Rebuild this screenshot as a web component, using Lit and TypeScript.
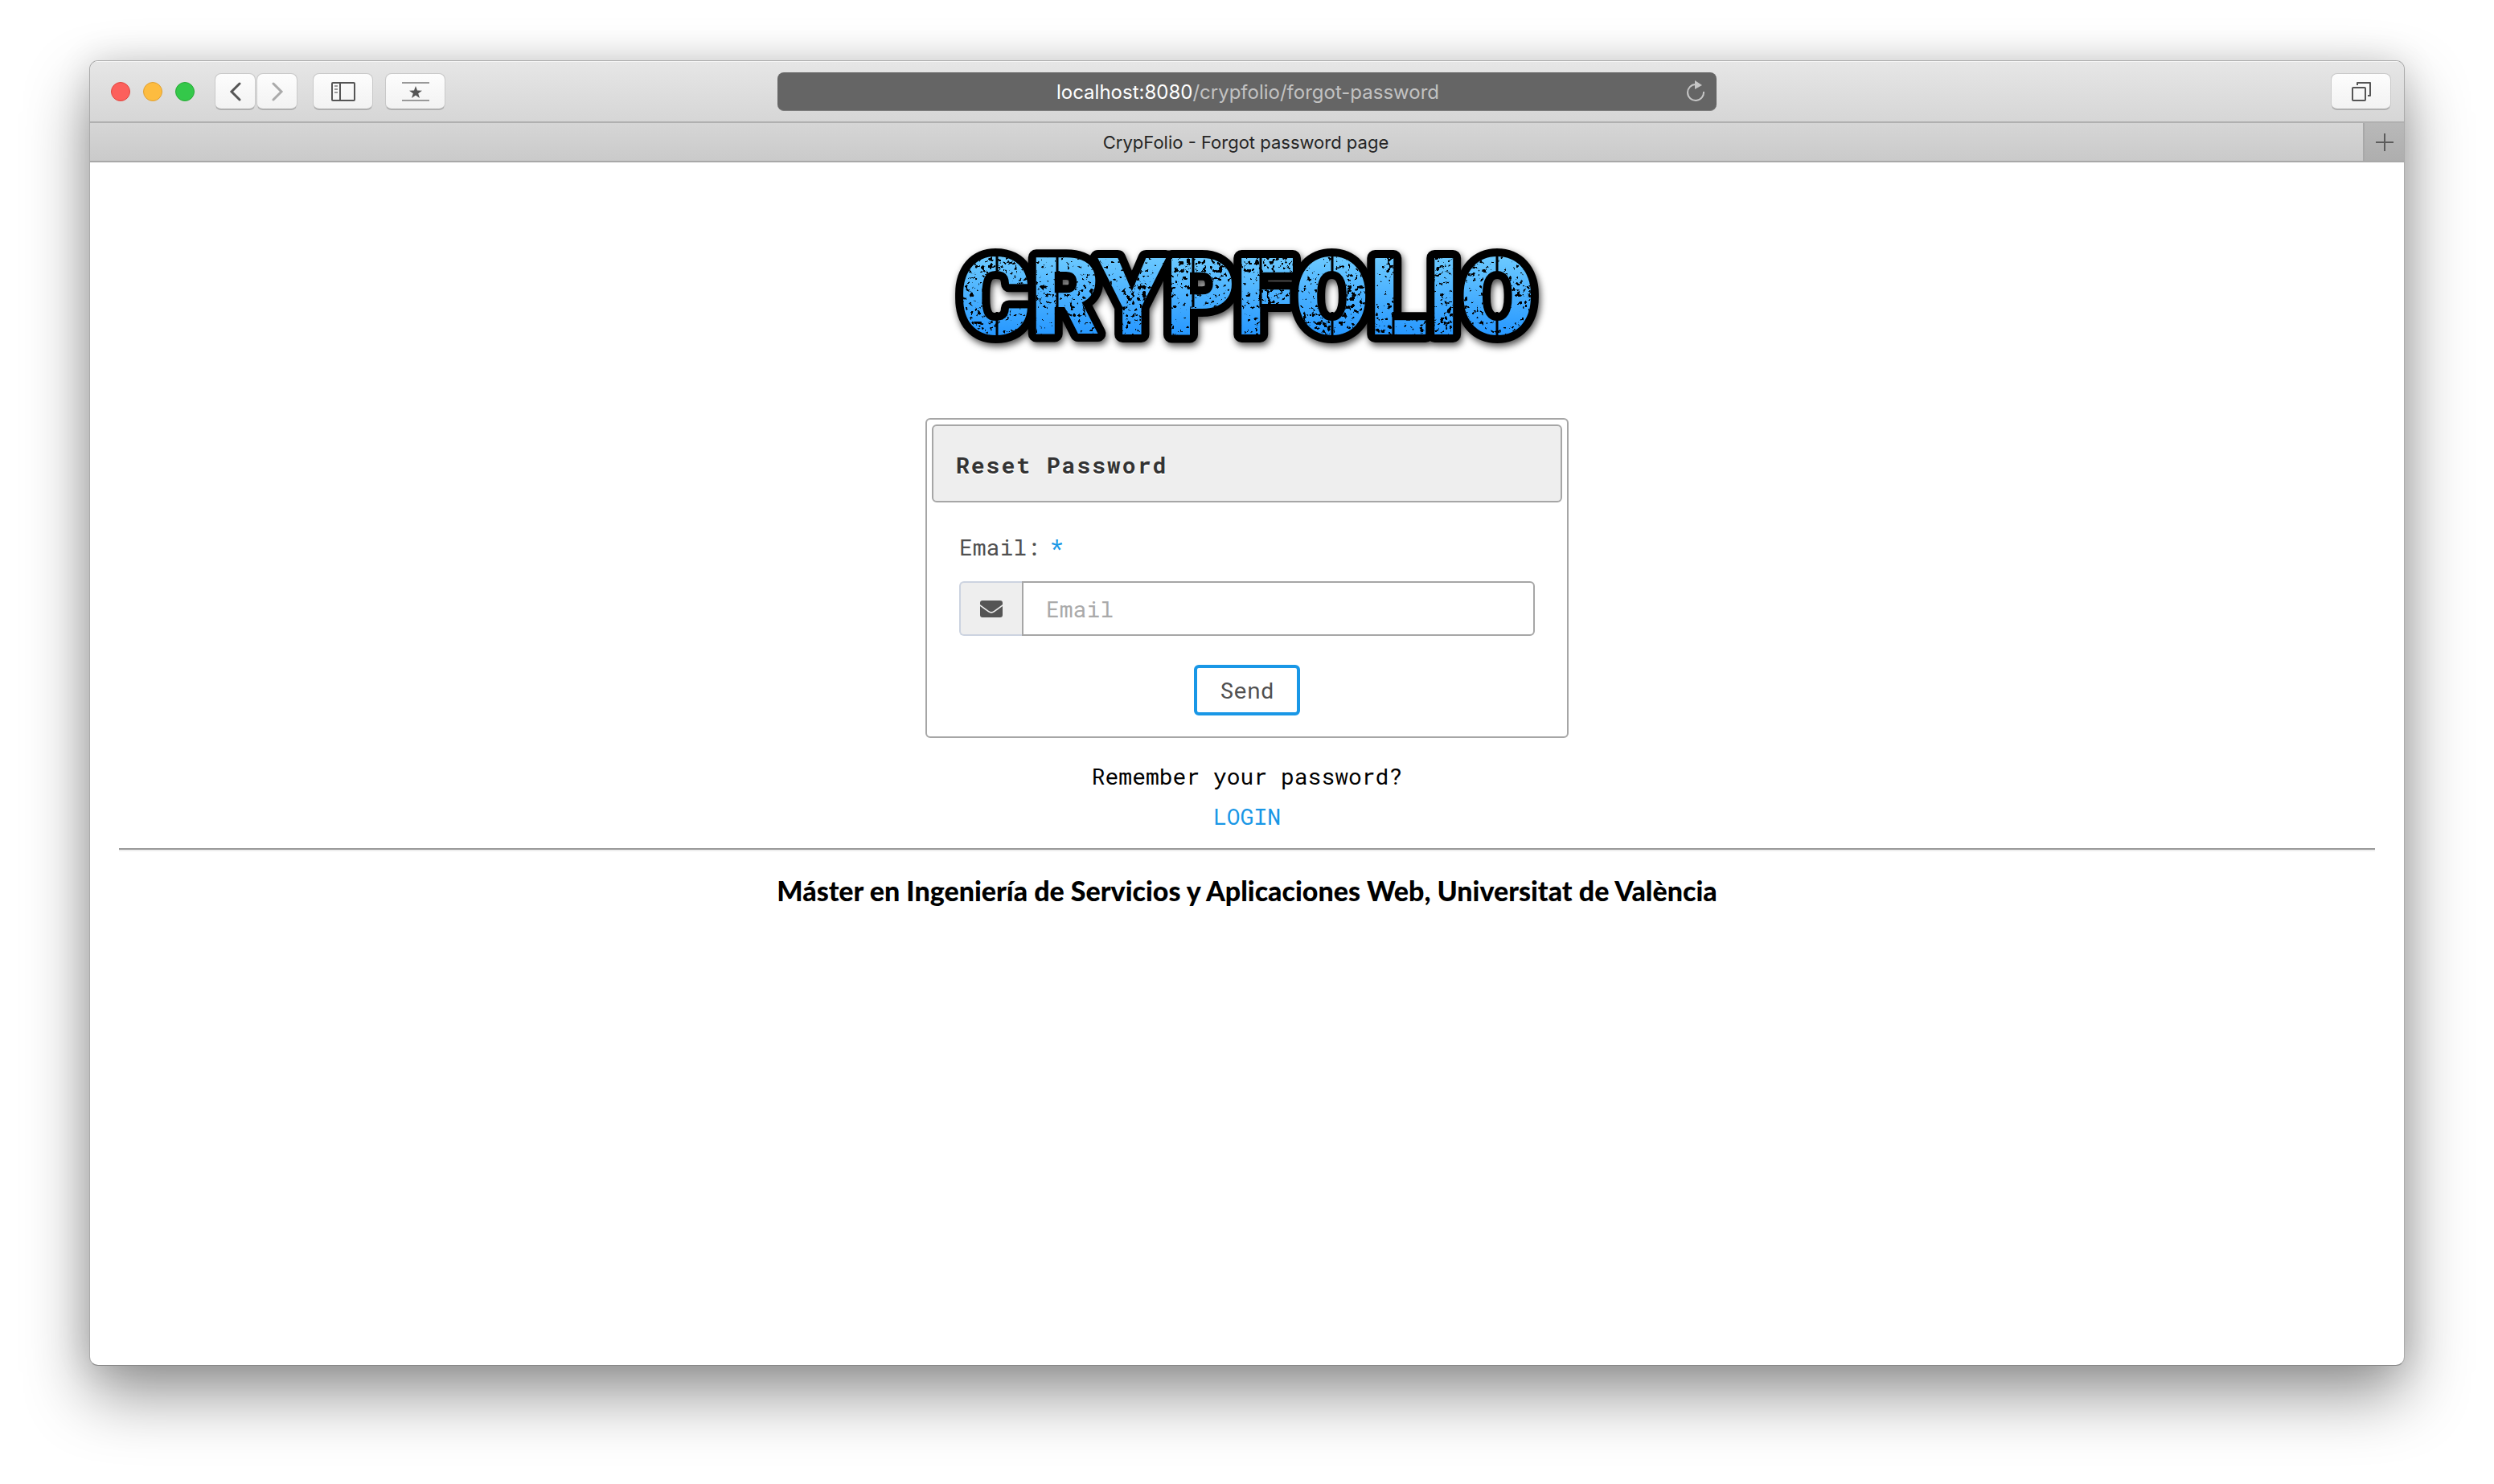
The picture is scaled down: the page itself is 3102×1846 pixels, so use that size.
import { LitElement, html, css, svg } from "lit";
import { customElement, state } from "lit/decorators.js";

@customElement("crypfolio-logo")
export class CrypfolioLogo extends LitElement {
  static styles = css`
    :host { display: block; }
    .art { display: block; width: 780px; height: 170px; }
    .word { font-family: Roboto, "Liberation Sans", sans-serif; font-weight: 900; font-size: 134px; }
  `;

  render() {
    return html`
      <svg class="art" viewBox="0 0 780 170" role="img" aria-label="CRYPFOLIO">
        <defs>
          <linearGradient id="sky" gradientUnits="userSpaceOnUse" x1="0" y1="37" x2="0" y2="137">
            <stop offset="0" stop-color="#6ecbff" />
            <stop offset="1" stop-color="#2697ff" />
          </linearGradient>
          <filter id="soft" x="-5%" y="-20%" width="110%" height="150%">
            <feDropShadow dx="2" dy="4" stdDeviation="4" flood-color="#000" flood-opacity="0.7" />
          </filter>
          <filter id="grunge" x="0" y="0" width="100%" height="100%" color-interpolation-filters="sRGB">
            <feTurbulence type="fractalNoise" baseFrequency="0.2" numOctaves="3" seed="7" result="fine" />
            <feTurbulence type="fractalNoise" baseFrequency="0.03" numOctaves="1" seed="12" result="broad" />
            <feColorMatrix in="fine" type="matrix" values="0 0 0 0 0  0 0 0 0 0  0 0 0 0 0  0 0 0 1 0" result="a" />
            <feColorMatrix in="broad" type="matrix" values="0 0 0 0 0  0 0 0 0 0  0 0 0 0 0  0 0 0 1 0" result="b" />
            <feComposite in="a" in2="b" operator="arithmetic" k1="0" k2="0.7" k3="0.3" k4="0" result="n" />
            <feColorMatrix in="n" type="matrix" values="0 0 0 0 0  0 0 0 0 0  0 0 0 0 0  0 0 0 22 -13" result="spots" />
            <feComposite in="spots" in2="SourceGraphic" operator="in" result="cut" />
            <feMerge><feMergeNode in="SourceGraphic" /><feMergeNode in="cut" /></feMerge>
          </filter>
        </defs>
        <g filter="url(#soft)">
          <text class="word" x="390" y="136" text-anchor="middle" fill="#000" stroke="#000" stroke-width="20" stroke-linejoin="round" aria-hidden="true">CRYPFOLIO</text>
        </g>
        <text class="word" x="390" y="136" text-anchor="middle" fill="url(#sky)" filter="url(#grunge)">CRYPFOLIO</text>
        <path d="M79 38v26M79 108v30M154 38v64M323 38v64M407 38v64M496 38v26M496 108v30M572 108v30M701 38v26M701 108v30" stroke="#000" stroke-width="3" />
      </svg>
    `;
  }
}

const starIcon = svg`<path d="M17 5l2 5.600 6 .1-4.800 3.600 1.800 5.700-5-3.400-5 3.400 1.800-5.700L9 10.700l6-.1z" fill="#555"/>`;

@customElement("app-root")
export class AppRoot extends LitElement {
  @state() private email = "";

  static styles = css`
    :host {
      display: flex;
      box-sizing: border-box;
      min-height: 100vh;
      padding: 75px 111px 147px;
      background: #fff;
      --blue: #1997e6;
      --line: #a6a6a6;
      --mono: "Roboto Mono", "DejaVu Sans Mono", "Liberation Mono", monospace;
      --ui: Inter, "Liberation Sans", sans-serif;
    }
    * { box-sizing: border-box; }
    button, input { font: inherit; margin: 0; }
    svg { display: block; }
    .window {
      flex: 1;
      min-width: 0;
      display: flex;
      flex-direction: column;
      border: 1px solid #aaa;
      border-bottom-color: #888;
      border-radius: 11px;
      overflow: hidden;
      background: #fff;
      box-shadow: 0 36px 80px rgba(0, 0, 0, 0.42), 0 0 44px rgba(0, 0, 0, 0.12);
    }
    .toolbar {
      display: grid;
      grid-template-columns: 1fr minmax(0, 1168px) 1fr;
      align-items: center;
      height: 75px;
      padding: 0 16px;
      border-top: 1px solid #f5f5f5;
      background: linear-gradient(#e6e6e6, #d6d6d6);
    }
    .left { display: flex; align-items: center; }
    .lights { display: flex; gap: 16px; margin: 0 25px 0 10px; }
    .light { width: 24px; height: 24px; border-radius: 50%; border: 1px solid; padding: 0; }
    .red { background: #fc605c; border-color: #e2463f; }
    .amber { background: #fdbc40; border-color: #dfa034; }
    .green { background: #34c84a; border-color: #27aa35; }
    .nav { display: flex; gap: 1px; margin-right: 19px; }
    .tool {
      display: flex;
      align-items: center;
      justify-content: center;
      width: 75px;
      height: 46px;
      padding: 0;
      border: 1px solid #c9c9c9;
      border-bottom: 2px solid #b0b0b0;
      border-radius: 8px;
      background: linear-gradient(#fdfdfd, #f2f2f2);
    }
    .small { width: 51px; }
    .pair { display: flex; gap: 15px; }
    .address {
      display: flex;
      align-items: center;
      height: 48px;
      padding: 0 13px 0 39px;
      border-radius: 8px;
      background: #656565;
      border-bottom: 1px solid #7c7c7c;
      font: 24px/32px var(--ui);
      color: #c2c2c2;
    }
    .url { flex: 1; padding-top: 2px; text-align: center; white-space: nowrap; overflow: hidden; }
    .host { color: #fff; }
    .reload { padding: 0; border: 0; background: none; }
    .right { display: flex; justify-content: flex-end; }
    .tabs {
      display: flex;
      height: 51px;
      border-top: 2px solid #b0b0b0;
      border-bottom: 2px solid #a8a8a8;
      background: linear-gradient(#d6d6d6, #cacaca);
    }
    .tab {
      flex: 1;
      padding: 0 0 0 48px;
      border: 0;
      background: none;
      font: 22px/46px var(--ui);
      color: #262626;
      text-align: center;
    }
    .plus {
      display: flex;
      align-items: center;
      justify-content: center;
      width: 51px;
      padding: 0;
      border: 0;
      border-left: 2px solid #a8a8a8;
      background: linear-gradient(#b9b9b9, #aeaeae);
    }
    .page {
      flex: 1;
      display: flex;
      flex-direction: column;
      align-items: center;
      padding: 78px 36px 0;
      font: 28px/50px var(--mono);
      color: #000;
    }
    .card {
      width: 100%;
      max-width: 800px;
      margin-top: 70px;
      padding: 6px;
      border: 2px solid var(--line);
      border-radius: 6px;
    }
    .title {
      margin: 0;
      padding: 26px 28px 21px;
      border: 2px solid var(--line);
      border-radius: 6px;
      background: #eee;
      font-size: 28px;
      line-height: 46px;
      font-weight: 700;
      letter-spacing: 2px;
      color: #333;
      text-shadow: 0 2px 0 #fff;
    }
    .form {
      display: flex;
      flex-direction: column;
      padding: 31px 34px 20px;
      color: #505050;
    }
    .star { color: var(--blue); }
    .label { display: flex; gap: 12px; margin-bottom: 17px; }
    .group { display: flex; }
    .addon {
      display: flex;
      align-items: center;
      justify-content: center;
      width: 78px;
      height: 68px;
      border: 2px solid #ccd3e0;
      border-right: 0;
      border-radius: 6px 0 0 6px;
      background: #eee;
    }
    .field {
      flex: 1;
      min-width: 0;
      height: 68px;
      padding: 0 28px;
      border: 2px solid var(--line);
      border-radius: 0 6px 6px 0;
      background: #fff;
      color: #505050;
      outline: none;
    }
    .field::placeholder { color: #aaa; opacity: 1; }
    .send {
      align-self: center;
      height: 63px;
      margin-top: 36px;
      padding: 0 28px;
      border: 4px solid var(--blue);
      border-radius: 6px;
      background: #fff;
      color: #505050;
      line-height: 50px;
    }
    .ask { margin: 23px 0 0; }
    .login { color: var(--blue); text-decoration: none; }
    .rule {
      width: 100%;
      height: 4px;
      margin: 14px 0 24px;
      border: 0;
      border-top: 2px solid #999;
      border-bottom: 2px solid #eee;
    }
    .credit { margin: 0; font: 900 34px/50px Lato, "Open Sans", sans-serif; text-align: center; }
  `;

  private onInput(e: Event) {
    this.email = (e.target as HTMLInputElement).value;
  }

  render() {
    return html`
      <div class="window">
        <header class="toolbar">
          <div class="left">
            <div class="lights">
              <button class="light red" aria-label="Close"></button>
              <button class="light amber" aria-label="Minimize"></button>
              <button class="light green" aria-label="Zoom"></button>
            </div>
            <div class="nav">
              <button class="tool small" aria-label="Back">
                <svg width="16" height="24" viewBox="0 0 16 24" fill="none" stroke="#555" stroke-width="3" stroke-linecap="round"><path d="M13 2L3 12l10 10" /></svg>
              </button>
              <button class="tool small" aria-label="Forward">
                <svg width="16" height="24" viewBox="0 0 16 24" fill="none" stroke="#aaa" stroke-width="3" stroke-linecap="round"><path d="M3 2l10 10L3 22" /></svg>
              </button>
            </div>
            <div class="pair">
              <button class="tool" aria-label="Sidebar">
                <svg width="30" height="24" viewBox="0 0 30 24" fill="none" stroke="#555" stroke-width="2"><rect x="1" y="1" width="28" height="22" rx="1" /><path d="M11 1v22" /><path d="M4 5h4M4 9h4M4 13h4" stroke="#999" /></svg>
              </button>
              <button class="tool" aria-label="Top sites">
                <svg width="34" height="24" viewBox="0 0 34 24"><path d="M0 1h34M0 23h34" stroke="#999" stroke-width="2" />${starIcon}</svg>
              </button>
            </div>
          </div>
          <div class="address">
            <span class="url"><span class="host">localhost:8080</span>/crypfolio/forgot-password</span>
            <button class="reload" aria-label="Reload">
              <svg width="24" height="28" viewBox="0 0 24 28"><path d="M11 5A10 10 0 1 0 21 14" fill="none" stroke="#c6c6c6" stroke-width="2" /><path d="M10 0l9 6-9 5z" fill="#c6c6c6" /></svg>
            </button>
          </div>
          <div class="right">
            <button class="tool" aria-label="Show all tabs">
              <svg width="24" height="24" viewBox="0 0 24 24" fill="none" stroke="#555" stroke-width="2"><rect x="1" y="7" width="16" height="16" rx="1" /><path d="M7 4V1h16v16h-3" stroke-linejoin="round" /></svg>
            </button>
          </div>
        </header>
        <div class="tabs">
          <button class="tab">CrypFolio - Forgot password page</button>
          <button class="plus" aria-label="New tab">
            <svg width="22" height="22" viewBox="0 0 22 22" stroke="#5c5c5c" stroke-width="2"><path d="M11 0v22M0 11h22" /></svg>
          </button>
        </div>
        <main class="page">
          <crypfolio-logo></crypfolio-logo>
          <section class="card">
            <h1 class="title">Reset Password</h1>
            <form class="form" @submit=${(e: Event) => e.preventDefault()}>
              <label class="label" for="email"><span>Email:</span><span class="star">*</span></label>
              <div class="group">
                <span class="addon">
                  <svg width="28" height="21" viewBox="0 0 28 21"><path d="M3 0h22a3 3 0 0 1 3 3v2L17 13q-3 2.200-6 0L0 5V3a3 3 0 0 1 3-3z" fill="#555" /><path d="M0 7l10 7.300q4 2.700 8 0L28 7v11a3 3 0 0 1-3 3H3a3 3 0 0 1-3-3z" fill="#555" /></svg>
                </span>
                <input class="field" id="email" type="email" placeholder="Email" .value=${this.email} @input=${this.onInput} />
              </div>
              <button class="send" type="submit">Send</button>
            </form>
          </section>
          <p class="ask">Remember your password?</p>
          <a class="login" href="#login">LOGIN</a>
          <hr class="rule" />
          <p class="credit">Máster en Ingeniería de Servicios y Aplicaciones Web, Universitat de València</p>
        </main>
      </div>
    `;
  }
}
